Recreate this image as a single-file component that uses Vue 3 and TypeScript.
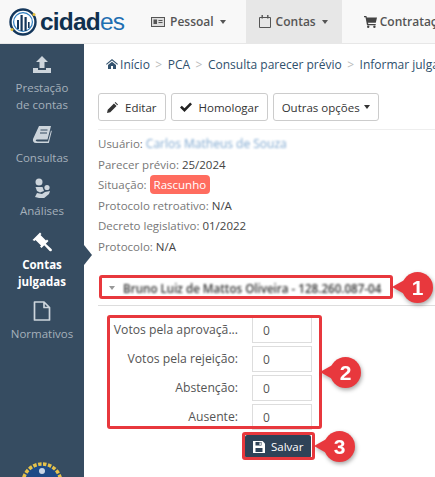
<script setup lang="ts">
interface NavItem {
  label: string
  icon: string
  active?: boolean
}

const sideItems: NavItem[] = [
  { label: 'Prestação de contas', icon: 'upload' },
  { label: 'Consultas', icon: 'book' },
  { label: 'Análises', icon: 'people' },
  { label: 'Contas julgadas', icon: 'gavel', active: true },
  { label: 'Normativos', icon: 'file' }
]

const voteFields = ['Votos pela aprovaçã...', 'Votos pela rejeição:', 'Abstenção:', 'Ausente:']
</script>

<template>
  <div class="page">
    <header class="topbar">
      <div class="brand">
        <svg class="brand-mark" viewBox="0 0 30 30" width="30" height="30">
          <circle cx="15" cy="15" r="12.5" fill="#fff" stroke="#14375c" stroke-width="2.4" />
          <circle cx="15" cy="15" r="9.4" fill="none" stroke="#2f7fc1" stroke-width="1.2" />
          <path d="M9 22V13h2v9zM12.5 24V8h2.200v16zM16.500 24V10h2.200v14zM20 21v-6h1.600v6z" fill="#14375c" />
          <circle cx="4" cy="22.500" r="1.500" fill="#e6c23c" />
          <circle cx="26" cy="7.500" r="1.500" fill="#e6c23c" />
        </svg>
        <span class="brand-name">cidad<em>es</em></span>
      </div>
      <nav class="topnav">
        <a class="topnav-item">
          <svg width="14" height="12" viewBox="0 0 14 12"><path d="M0 1h14v10H0z" fill="#555" /><path d="M1 2h12v8H1z" fill="#ddd" /><path d="M2.500 3.500h3.500v4.500H2.500z" fill="#555" /><path d="M7.500 4h4v1h-4zM7.500 6h4v1h-4z" fill="#555" /></svg>
          Pessoal <i class="caret" />
        </a>
        <a class="topnav-item current">
          <svg width="12" height="13" viewBox="0 0 12 13"><path d="M.5 2.500h11v10H.5z" fill="none" stroke="#555" /><path d="M2.500 0h1.400v3.500H2.500zM8.100 0h1.400v3.500H8.100z" fill="#555" /></svg>
          Contas <i class="caret" />
        </a>
        <a class="topnav-item cart">
          <svg width="13" height="12" viewBox="0 0 13 12"><path d="M0 0h2.400l.4 1.600H13l-1.200 5.200H4l.3 1.200h7.400v1.200H3L1.500 1.200H0z" fill="#444" /><circle cx="4.200" cy="10.800" r="1.200" fill="#444" /><circle cx="10.400" cy="10.800" r="1.200" fill="#444" /></svg>
          Contratações
        </a>
      </nav>
    </header>

    <div class="body">
      <aside class="sidebar">
        <a v-for="item in sideItems" :key="item.label" class="side-item" :class="{ active: item.active }">
          <svg v-if="item.icon === 'upload'" viewBox="0 0 20 20" width="20" height="20">
            <path d="M10 1l6 6h-3.500v6h-5V7H4z" fill="currentColor" />
            <path d="M1 13h5v2h8v-2h5v5H1z" fill="currentColor" />
          </svg>
          <svg v-else-if="item.icon === 'book'" viewBox="0 0 20 20" width="20" height="20">
            <path d="M7 1h12l-3.500 13.500H5c-1.200 0-1.500 1-1 1.600.3.400 1 .4 1.600.4H16l3-11 .8.500-3 12H4c-2.500 0-3.500-2-3-4z" fill="currentColor" />
            <path d="M8.500 5h7M8 8h7" stroke="#364c61" stroke-width="1.100" />
          </svg>
          <svg v-else-if="item.icon === 'people'" viewBox="0 0 20 20" width="20" height="20">
            <circle cx="7" cy="4" r="3.500" fill="currentColor" />
            <path d="M3.500 9h7l1.500 4-4 1.500-3-1.500z" fill="currentColor" />
            <circle cx="15" cy="9.500" r="2.600" fill="currentColor" />
            <path d="M3 19l2-4 5 1 3-2 5-1-1 3-6 5z" fill="currentColor" />
          </svg>
          <svg v-else-if="item.icon === 'gavel'" viewBox="0 0 20 20" width="20" height="20">
            <path d="M0.500 8l7.500-7.500 1.500 1.500-1 1 5.500 5.500 1-1 1.500 1.500-7 7-1.500-1.500 1-1-5.500-5.500-1 1z" fill="currentColor" />
            <path d="M11.500 12.500l1.500-1.500 6.500 6c.6.700.5 1.400 0 1.900-.6.600-1.300.5-1.900 0z" fill="currentColor" />
          </svg>
          <svg v-else viewBox="0 0 20 20" width="20" height="20">
            <path d="M2.500 1h9.500l5.500 5.500V19h-15zM12 1v5.500h5.500" fill="none" stroke="currentColor" stroke-width="1.700" stroke-linejoin="round" />
          </svg>
          <span>{{ item.label }}</span>
        </a>
        <div class="sidebar-seal">
          <svg viewBox="0 0 44 44" width="44" height="44">
            <circle cx="22" cy="22" r="19" fill="#1d4a86" stroke="#e6c24a" stroke-width="3.500" stroke-dasharray="3.500 1.500" />
            <circle cx="22" cy="10" r="3" fill="#c9d6e6" />
          </svg>
        </div>
      </aside>

      <main class="content">
        <ol class="crumbs">
          <li>
            <svg class="home" width="12" height="10" viewBox="0 0 12 10"><path d="M6 0l6 5-.7.800L6 1.500.7 5.800 0 5zM2 6l4-3.200L10 6v4H7V7H5v3H2z" fill="#34536f" /></svg>
            Início
          </li>
          <li>PCA</li>
          <li>Consulta parecer prévio</li>
          <li>Informar julgamento</li>
        </ol>

        <div class="toolbar">
          <button class="btn">
            <svg width="11" height="11" viewBox="0 0 12 12"><path d="M0 12l.8-3.600 6.800-6.800 2.800 2.800-6.800 6.800zM8.400.8 9.200 0 12 2.800l-.8.800z" fill="#333" /></svg>
            Editar
          </button>
          <button class="btn">
            <svg width="12" height="10" viewBox="0 0 12 10"><path d="M0 5.500 1.800 3.700 4.500 6.300 10.200.5 12 2.300 4.500 10z" fill="#222" /></svg>
            Homologar
          </button>
          <button class="btn">Outras opções <i class="caret" /></button>
        </div>

        <div class="details">
          <p>Usuário: <span class="smudge light">Carlos Matheus de Souza</span></p>
          <p>Parecer prévio: <b>25/2024</b></p>
          <p>Situação: <span class="tag">Rascunho</span></p>
          <p>Protocolo retroativo: <b>N/A</b></p>
          <p>Decreto legislativo: <b>01/2022</b></p>
          <p>Protocolo: <b>N/A</b></p>
        </div>

        <div class="person">
          <div class="person-row">
            <i class="person-caret" />
            <span class="smudge dark">Bruno Luiz de Mattos Oliveira - 128.260.087-04</span>
          </div>
        </div>

        <form class="votes" @submit.prevent>
          <div class="votes-fields">
            <div v-for="field in voteFields" :key="field" class="vote-row">
              <label>{{ field }}</label>
              <input value="0" readonly />
            </div>
          </div>
          <button class="save">
            <svg width="12" height="12" viewBox="0 0 12 12"><path d="M0 0h9.500L12 2.500V12H0z" fill="#fff" /><path d="M2.500 1h6v3.500h-6zM2.500 7h7v4h-7z" fill="#2f4358" /><path d="M6.500 1.500h1.300V4H6.500z" fill="#fff" /></svg>
            Salvar
          </button>
        </form>
      </main>
    </div>

    <i class="side-arrow" />
    <div class="mark mark-1" /><div class="mark mark-2" /><div class="mark mark-3" />
    <div class="callout c1">1</div>
    <div class="callout c2">2</div>
    <div class="callout c3">3</div>
  </div>
</template>

<style>
html, body {
  margin: 0;
  background: #fff;
  overflow: hidden;
}
</style>

<style scoped>
.page {
  position: relative;
  width: 435px;
  height: 477px;
  overflow: hidden;
  font-family: "Open Sans", "Liberation Sans", sans-serif;
  font-size: 11.5px;
  color: #777;
}

.topbar {
  display: flex;
  height: 43px;
  background: #f8f8f8;
  border-bottom: 1px solid #e7e7e7;
}

.brand {
  display: flex;
  align-items: center;
  gap: 2px;
  width: 138px;
  padding-left: 8px;
  box-sizing: border-box;
  flex: none;
}

.brand-name {
  font-family: "Liberation Sans", sans-serif;
  font-size: 24.5px;
  font-weight: 700;
  letter-spacing: -0.8px;
  color: #10304f;
}

.brand-name em {
  font-style: normal;
  font-weight: 400;
  color: #1f6fb2;
}

.topnav {
  display: flex;
  gap: 7px;
  white-space: nowrap;
}

.topnav-item {
  display: flex;
  align-items: center;
  gap: 5px;
  padding: 0 13px;
  font-size: 12px;
  font-weight: 600;
  color: #555;
}

.topnav-item.current {
  background: #e7e7e7;
  padding-right: 14px;
}

.topnav-item.cart {
  gap: 3px;
  margin-left: 2px;
}

.caret {
  display: inline-block;
  width: 0;
  height: 0;
  margin-left: 1px;
  vertical-align: middle;
  border-top: 4px solid currentColor;
  border-left: 3.5px solid transparent;
  border-right: 3.5px solid transparent;
}

.body {
  display: flex;
  height: 433px;
}

.sidebar {
  position: relative;
  flex: none;
  width: 84px;
  padding-top: 11px;
  box-sizing: border-box;
  background: #364c61;
  color: #a5b0bb;
}

.side-item {
  display: flex;
  flex-direction: column;
  align-items: center;
  gap: 4px;
  margin-bottom: 12px;
  padding: 0 12px;
  font-size: 11.5px;
  line-height: 17px;
  text-align: center;
}

.side-item svg {
  color: #cdd5dc;
}

.side-item.active {
  margin-top: 13px;
  margin-bottom: 11px;
  color: #fff;
  font-weight: 700;
}

.side-item.active svg {
  color: #fff;
}

.sidebar-seal {
  position: absolute;
  left: 20px;
  bottom: -31px;
}

.side-arrow {
  position: absolute;
  left: 84px;
  top: 245px;
  border-left: 8px solid #364c61;
  border-top: 10px solid transparent;
  border-bottom: 10px solid transparent;
}

.content {
  flex: 1;
  min-width: 0;
  padding-left: 14px;
}

.crumbs {
  display: flex;
  margin: 0;
  padding: 12px 0 0 8px;
  list-style: none;
  white-space: nowrap;
  font-size: 12px;
  line-height: 17px;
  color: #2e4f6c;
}

.crumbs .home {
  margin-right: -1px;
}

.crumbs li + li::before {
  content: ">";
  margin: 0 5.5px;
  font-weight: 400;
  color: #bbb;
}

.toolbar {
  display: flex;
  gap: 5px;
  margin-top: 20px;
  padding-bottom: 8px;
  border-bottom: 1px solid #eee;
}

.btn {
  display: flex;
  align-items: center;
  gap: 7px;
  height: 28px;
  padding: 0 8px;
  background: #fff;
  border: 1px solid #ccc;
  border-radius: 3px;
  font: inherit;
  color: #333;
}

.btn .caret {
  margin-left: -3px;
}

.details {
  margin-top: 4px;
}

.details p {
  margin: 0;
  height: 20.5px;
  line-height: 20.5px;
  white-space: nowrap;
}

.details b {
  font-weight: 400;
  color: #444;
}

.tag {
  padding: 2px 4px;
  background: #ff6c5f;
  border-radius: 4px;
  color: #fff;
}

.smudge {
  filter: blur(1.3px);
}

.smudge.light {
  font-size: 12px;
  color: #7fa8d0;
}

.smudge.dark {
  font-size: 11.6px;
  font-weight: 600;
  color: #333;
}

.person {
  margin-top: 21px;
  padding-bottom: 7px;
  border-bottom: 1px solid #ddd;
}

.person-row {
  display: flex;
  align-items: center;
  gap: 8px;
  height: 20px;
  padding-left: 11px;
  white-space: nowrap;
}

.person-caret {
  border-top: 4px solid #999;
  border-left: 3px solid transparent;
  border-right: 3px solid transparent;
}

.votes-fields {
  display: flex;
  flex-direction: column;
  gap: 3px;
  padding-top: 11px;
}

.vote-row {
  display: flex;
  align-items: center;
  height: 26px;
}

.vote-row label {
  width: 140px;
  margin-right: 14px;
  text-align: right;
  font-size: 12.2px;
  line-height: 24px;
  color: #555;
  white-space: nowrap;
}

.vote-row input {
  width: 60px;
  height: 26px;
  box-sizing: border-box;
  padding: 0 10px;
  border: 1px solid #ddd;
  font: inherit;
  font-size: 12px;
  color: #555;
}

.save {
  display: flex;
  align-items: center;
  gap: 6px;
  height: 23px;
  margin: 5px 0 0 147px;
  padding: 0 8px;
  background: #2f4358;
  border: none;
  border-radius: 2px;
  font: inherit;
  color: #fff;
}

.mark {
  position: absolute;
  box-sizing: border-box;
  border: 3px solid #e8383d;
  border-radius: 3px;
}

.mark-1 { left: 99px; top: 275px; width: 294px; height: 24px; }
.mark-2 { left: 107px; top: 315px; width: 215px; height: 114px; }
.mark-3 { left: 242px; top: 432px; width: 73px; height: 28px; }

.callout {
  position: absolute;
  width: 31px;
  height: 31px;
  line-height: 31px;
  border-radius: 50%;
  background: #e8383d;
  color: #fff;
  text-align: center;
  font-family: "Liberation Sans", sans-serif;
  font-size: 21px;
  font-weight: 700;
  filter: drop-shadow(1px 2px 2px rgba(0, 0, 0, 0.35));
}

.callout::before {
  content: "";
  position: absolute;
  left: -10px;
  top: 6px;
  border-right: 16px solid #e8383d;
  border-top: 9.5px solid transparent;
  border-bottom: 9.5px solid transparent;
}

.c1 { left: 402px; top: 272px; }
.c2 { left: 330px; top: 357px; }
.c3 { left: 324px; top: 431px; }
</style>
